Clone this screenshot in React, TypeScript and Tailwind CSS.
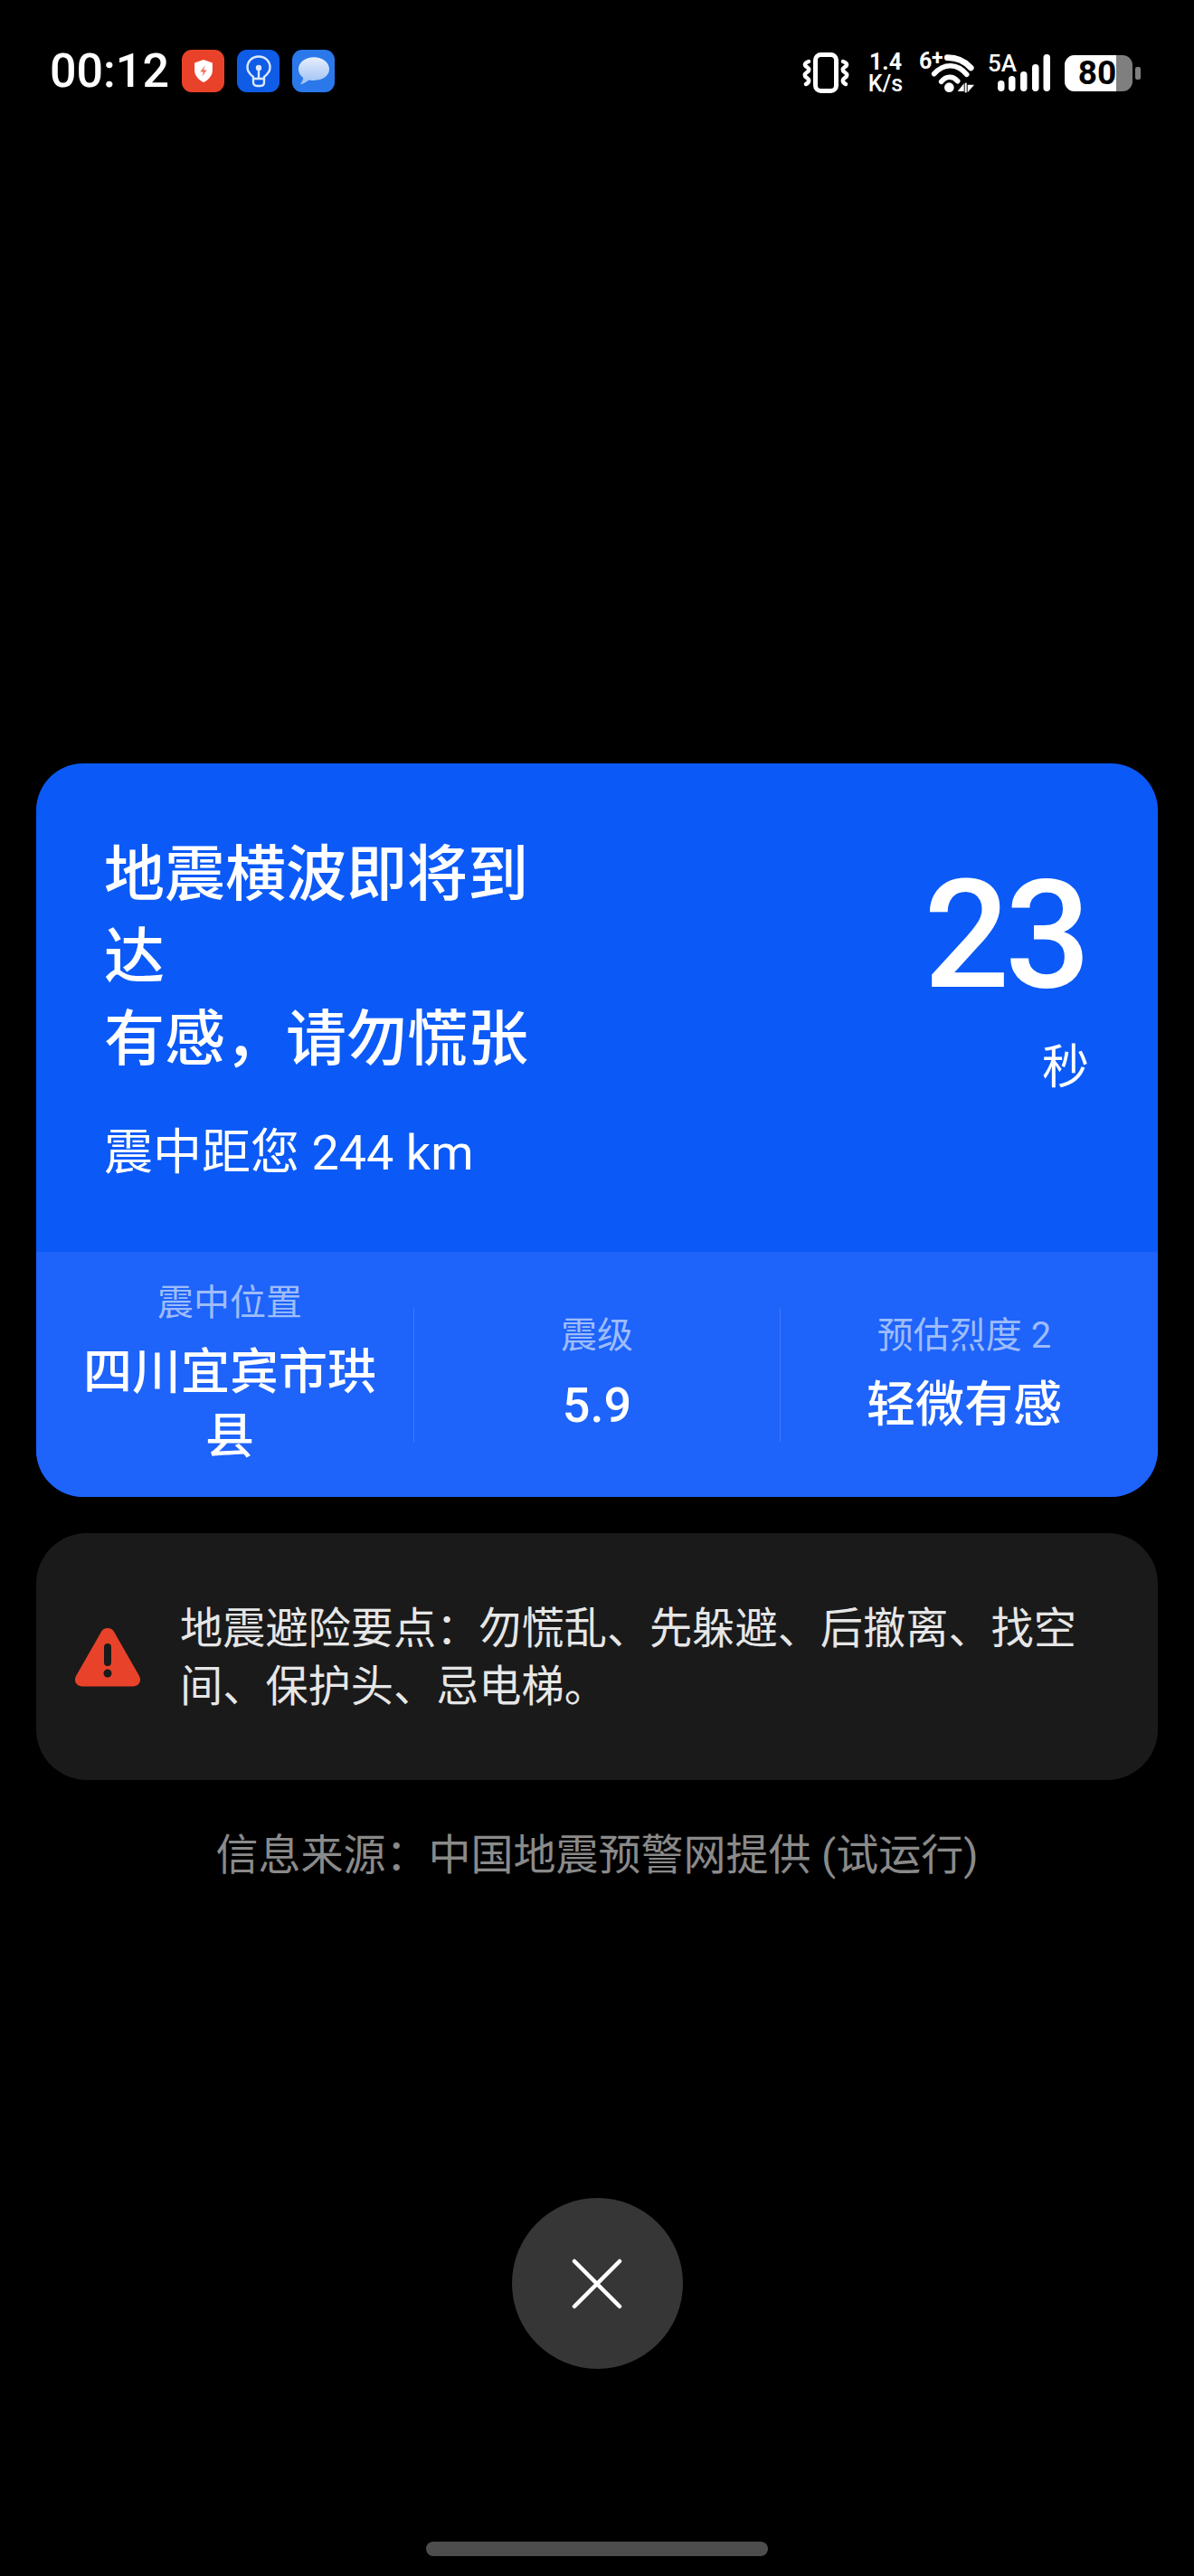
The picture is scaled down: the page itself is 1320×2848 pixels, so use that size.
const font = "font-['Roboto','Noto_Sans_CJK_SC',sans-serif]";

function ShieldBadge() {
  return (
    <div className="flex h-[47px] w-[47px] items-center justify-center rounded-[11px] bg-[#e8432a]">
      <svg width="24" height="27" viewBox="0 0 26 30">
        <path d="M13 1 L24 5 V14 C24 21 19 26 13 29 C7 26 2 21 2 14 V5 Z" fill="#fff" />
        <path d="M15 8 L9 16 H13 L11 22 L17 14 H13 Z" fill="#ee6a52" />
      </svg>
    </div>
  );
}

function BulbBadge() {
  return (
    <div className="flex h-[47px] w-[47px] items-center justify-center rounded-[11px] bg-[#0f5ce6]">
      <svg width="28" height="36" viewBox="0 0 28 36" fill="none" stroke="#dbe8ff" strokeWidth="2.400" strokeLinecap="round" strokeLinejoin="round">
        <path d="M8 24 C4 21 1.500 17.500 1.500 13.500 C1.500 6.500 7 1.500 14 1.500 C21 1.500 26.500 6.500 26.500 13.500 C26.500 17.500 24 21 20 24 V30 C20 32.500 18.500 34 16 34 H12 C9.500 34 8 32.500 8 30 Z" />
        <path d="M14 15 V25" />
        <path d="M8 26 H20" />
        <circle cx="14" cy="14" r="2" fill="#dbe8ff" />
      </svg>
    </div>
  );
}

function MessageBadge() {
  return (
    <div className="flex h-[47px] w-[47px] items-center justify-center rounded-[11px] bg-[#2a78ea]">
      <svg width="36" height="33" viewBox="0 0 38 34">
        <defs>
          <linearGradient id="bubble" x1="0" y1="0" x2="0" y2="1">
            <stop offset="0" stopColor="#e6eefc" />
            <stop offset="1" stopColor="#9cc0f5" />
          </linearGradient>
        </defs>
        <path d="M19 1 C29 1 37 7 37 15 C37 23 29 28 19 28 C17 28 15 28 13 27.500 C10 30 7 32 3 32.500 C5 30 6.500 27.500 6.500 25 C3 22.500 1 19 1 15 C1 7 9 1 19 1 Z" fill="url(#bubble)" />
      </svg>
    </div>
  );
}

function VibrateIcon() {
  return (
    <svg width="52" height="46" viewBox="0 0 52 46" fill="none" stroke="#fff" strokeLinecap="round" strokeLinejoin="round">
      <rect x="14.500" y="2.500" width="23" height="40" rx="6" strokeWidth="5" />
      <path d="M7 10 C2 12 2 14 5 16 C8 18 8 20 5 22 C2 24 2 26 5 28 C8 30 8 33 4 35" strokeWidth="4.500" />
      <path d="M45 10 C50 12 50 14 47 16 C44 18 44 20 47 22 C50 24 50 26 47 28 C44 30 44 33 48 35" strokeWidth="4.500" />
    </svg>
  );
}

function WifiIcon() {
  return (
    <div className="relative h-[46px] w-[64px]">
      <span className="absolute left-[1px] top-[-4px] text-[25px] font-bold leading-[28px] text-white">6</span>
      <span className="absolute left-[15px] top-[-6px] text-[23px] font-bold leading-[26px] text-white">+</span>
      <svg className="absolute inset-0" width="64" height="46" viewBox="15 21 192 138" fill="none" stroke="#fff" strokeLinecap="round">
        <path d="M112 38 C145 38 170 50 190 72" strokeWidth="20" />
        <path d="M68 92 C100 56 145 56 176 94" strokeWidth="17" />
        <path d="M92 118 C108 98 130 98 146 116" strokeWidth="17" />
        <circle cx="118" cy="137" r="16" fill="#fff" stroke="none" />
        <path d="M167 124 L146 150 H167 Z" fill="#fff" stroke="none" />
        <rect x="170" y="122" width="6" height="32" fill="#fff" stroke="none" />
        <path d="M179 128 H201 L179 154 Z" fill="#fff" stroke="none" />
      </svg>
    </div>
  );
}

function SignalIcon() {
  return (
    <div className="relative h-[46px] w-[70px]">
      <span className="absolute left-0 top-[-2px] text-[26px] font-medium leading-[28px] text-white">5A</span>
      <svg className="absolute inset-0" width="70" height="46" viewBox="0 0 70 46" fill="#fff">
        <rect x="11" y="31" width="7.500" height="12" rx="3.700" />
        <rect x="23" y="26" width="7.500" height="17" rx="3.700" />
        <rect x="36" y="21" width="7.500" height="22" rx="3.700" />
        <rect x="49" y="13" width="7.500" height="30" rx="3.700" />
        <rect x="61.500" y="2" width="7.500" height="41" rx="3.700" />
      </svg>
    </div>
  );
}

function BatteryIcon() {
  return (
    <div className="flex items-center gap-[3px]">
      <div className="relative flex h-[40px] w-[75px] items-center justify-center rounded-[11px] bg-[#7f7f7f]">
        <div className="absolute inset-y-0 left-0 w-[57px] rounded-l-[11px] bg-white" />
        <span className="relative pr-[3px] text-[37px] font-bold leading-[40px] text-black">80</span>
      </div>
      <div className="h-[14px] w-[6px] rounded-[2px] bg-[#7f7f7f]" />
    </div>
  );
}

function StatusBar() {
  return (
    <div className="flex h-[110px] shrink-0 items-start justify-between pl-[55px] pr-[59px] pt-[55px]">
      <div className="flex items-center">
        <span className="w-[146px] text-[52px] font-medium leading-[47px] text-white">00:12</span>
        <div className="flex gap-[14px]">
          <ShieldBadge />
          <BulbBadge />
          <MessageBadge />
        </div>
      </div>
      <div className="flex items-center pt-[2px]">
        <VibrateIcon />
        <div className="ml-[19px] flex w-[42px] flex-col items-center text-white">
          <span className="text-[25px] font-bold leading-[24px]">1.4</span>
          <span className="text-[25px] font-medium leading-[24px]">K/s</span>
        </div>
        <div className="ml-[15px]"><WifiIcon /></div>
        <div className="ml-[13px]"><SignalIcon /></div>
        <div className="ml-[15px]"><BatteryIcon /></div>
      </div>
    </div>
  );
}

function Stat({ label, value }: { label: string; value: string }) {
  return (
    <div className="flex flex-col items-center text-center">
      <div className="text-[40px] leading-[52px] text-[#9dbcfb]">{label}</div>
      <div className="mt-[15px] w-[340px] text-[54px] font-medium leading-[71px] text-white">{value}</div>
    </div>
  );
}

function AlertCard() {
  return (
    <div className="overflow-hidden rounded-[52px] bg-[#0b5af7] text-white">
      <div className="flex h-[540px] justify-between pl-[75px] pr-[76px]">
        <div className="pt-[78px]">
          <div className="w-[500px] text-[67px] font-medium leading-[91px]">
            地震横波即将到达
            <br />
            {"有感\uFF0C请勿慌张"}
          </div>
          <div className="mt-[50px] text-[54px] leading-[60px]">震中距您 244 km</div>
        </div>
        <div className="pt-[104px] text-right">
          <div className="mr-[3px] text-[167px] font-medium leading-[172px] tracking-[-5px]">23</div>
          <div className="mt-[31px] text-[52px] leading-[60px]">秒</div>
        </div>
      </div>
      <div className="grid h-[271px] grid-cols-3 items-center bg-[#1e63fa] px-[11px]">
        <Stat label="震中位置" value="四川宜宾市珙县" />
        <div className="flex h-[148px] items-center justify-center border-x border-[#3f7afb]">
          <Stat label="震级" value="5.9" />
        </div>
        <Stat label="预估烈度 2" value="轻微有感" />
      </div>
    </div>
  );
}

function SafetyTips() {
  return (
    <div className="mt-[40px] flex h-[273px] items-center rounded-[56px] bg-[#1a1a1a] pl-[42px] pr-[80px]">
      <svg className="shrink-0" width="74" height="66" viewBox="0 0 74 66">
        <path d="M37 1 C40 1 42.500 2.500 44 5 L72 54 C75 60 71 65.500 65 65.500 H9 C3 65.500 -1 60 2 54 L30 5 C31.500 2.500 34 1 37 1 Z" fill="#e8432a" />
        <rect x="33" y="18" width="8" height="25" rx="4" fill="#1a1a1a" />
        <circle cx="37" cy="51" r="4.500" fill="#1a1a1a" />
      </svg>
      <p className="ml-[43px] pt-[2px] text-[47.2px] leading-[64px] text-[#e6e6e6]">
        {"地震避险要点\uFF1A勿慌乱、先躲避、后撤离、找空间、保护头、忌电梯。"}
      </p>
    </div>
  );
}

function CloseButton() {
  return (
    <button type="button" className="flex h-[189px] w-[189px] items-center justify-center rounded-full bg-[#363636]">
      <svg width="56" height="56" viewBox="0 0 56 56" fill="none" stroke="#fff" strokeWidth="4.500" strokeLinecap="round">
        <path d="M3 3 L53 53" />
        <path d="M53 3 L3 53" />
      </svg>
    </button>
  );
}

export default function App() {
  return (
    <div lang="zh-CN" className={`flex h-[2848px] w-[1320px] flex-col overflow-hidden bg-black ${font}`}>
      <StatusBar />
      <div className="mt-[734px] px-[40px]">
        <AlertCard />
        <SafetyTips />
      </div>
      <p className="mt-[50px] text-center text-[47px] leading-[66px] text-[#8a8a8a]">
        {"信息来源\uFF1A中国地震预警网提供 (试运行)"}
      </p>
      <div className="mt-[346px] flex justify-center">
        <CloseButton />
      </div>
      <div className="mt-[191px] flex justify-center">
        <div className="h-[16px] w-[378px] rounded-full bg-[#4d4d4d]" />
      </div>
    </div>
  );
}
